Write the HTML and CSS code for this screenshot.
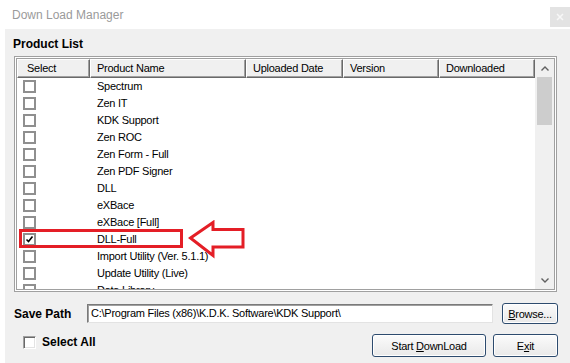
FILE: index.html
```html
<!DOCTYPE html>
<html lang="en">
<head>
    <meta charset="UTF-8">
    <title>Down Load Manager</title>
    <link rel="stylesheet" href="styles.css">
</head>
<body>
    <div class="titlebar">
        <span class="title">Down Load Manager</span>
        <div class="close-btn">
            <svg width="8" height="8" viewBox="0 0 8 8"><path d="M1 1 L7 7 M7 1 L1 7" stroke="#f7f7f7" stroke-width="1.5"/></svg>
        </div>
    </div>

    <div class="window">
        <div class="group-title">Product List</div>

        <div class="listbox">
            <div class="list-inner">
                <div class="grid-area">
                    <div class="header">
                        <div class="hcell first">Select</div>
                        <div class="hcell">Product Name</div>
                        <div class="hcell">Uploaded Date</div>
                        <div class="hcell">Version</div>
                        <div class="hcell">Downloaded</div>
                    </div>
                    <div class="rows">
                        <div class="row"><span class="cb"></span><span class="name">Spectrum</span></div>
                        <div class="row"><span class="cb"></span><span class="name">Zen IT</span></div>
                        <div class="row"><span class="cb"></span><span class="name">KDK Support</span></div>
                        <div class="row"><span class="cb"></span><span class="name">Zen ROC</span></div>
                        <div class="row"><span class="cb"></span><span class="name">Zen Form - Full</span></div>
                        <div class="row"><span class="cb"></span><span class="name">Zen PDF Signer</span></div>
                        <div class="row"><span class="cb"></span><span class="name">DLL</span></div>
                        <div class="row"><span class="cb"></span><span class="name">eXBace</span></div>
                        <div class="row"><span class="cb"></span><span class="name">eXBace [Full]</span></div>
                        <div class="row"><span class="cb checked"><svg width="9" height="9" viewBox="0 0 9 9"><path d="M1.5 4.5 L3.5 6.5 L7.5 1.5" stroke="#000" stroke-width="1.6" fill="none"/></svg></span><span class="name">DLL-Full</span></div>
                        <div class="row"><span class="cb"></span><span class="name">Import Utility (Ver. 5.1.1)</span></div>
                        <div class="row"><span class="cb"></span><span class="name">Update Utility (Live)</span></div>
                        <div class="row"><span class="cb"></span><span class="name">Data Library</span></div>
                    </div>
                </div>
                <div class="vscroll">
                    <div class="sbtn">
                        <svg width="8" height="5" viewBox="0 0 8 5"><path d="M0.5 4.5 L4 1 L7.5 4.5" stroke="#606060" stroke-width="1.4" fill="none"/></svg>
                    </div>
                    <div class="track"><div class="thumb"></div></div>
                    <div class="sbtn">
                        <svg width="8" height="5" viewBox="0 0 8 5"><path d="M0.5 0.5 L4 4 L7.5 0.5" stroke="#606060" stroke-width="1.4" fill="none"/></svg>
                    </div>
                </div>
            </div>

            <!-- callout drawn over the list -->
            <div class="highlight"></div>
            <svg class="callout" width="58" height="40" viewBox="0 0 58 40">
                <path d="M2.5 18 L25 2.5 L25 9.5 L55 9.5 L55 27 L25 27 L25 35.5 Z" fill="#fff" stroke="#e41e26" stroke-width="3"/>
            </svg>
        </div>

        <div class="save-row">
            <span class="label">Save Path</span>
            <div class="textbox">C:\Program Files (x86)\K.D.K. Software\KDK Support\</div>
            <button class="btn browse"><u>B</u>rowse...</button>
        </div>

        <div class="bottom-row">
            <span class="classic-cb"></span>
            <span class="label select-all">Select All</span>
            <button class="btn start">Start <u>D</u>ownLoad</button>
            <button class="btn exit">E<u>x</u>it</button>
        </div>
    </div>
</body>
</html>
```

FILE: styles.css
```css
body {
    margin: 0;
    width: 570px;
    height: 363px;
    overflow: hidden;
    background: #fff;
    font-family: "Liberation Sans", Arial, sans-serif;
    color: #000;
}

.titlebar {
    height: 29px;
    display: flex;
    align-items: center;
    padding-left: 12px;
}

.title {
    font-size: 12px;
    color: #9a9a9a;
    margin-top: 1px;
}

.close-btn {
    margin-left: auto;
    align-self: flex-start;
    margin-top: 7px;
    width: 20px;
    height: 20px;
    background: #e3e3e3;
    display: flex;
    align-items: center;
    justify-content: center;
}

.window {
    margin-left: 5px;
    height: 334px;
    background: #f0f0f0;
    padding: 8px 12px 0 9px;
    box-sizing: border-box;
}

.group-title {
    font-size: 12px;
    font-weight: bold;
    line-height: 14px;
    margin-left: -1px;
}

.listbox {
    position: relative;
    margin-top: 5px;
    width: 543px;
    height: 236px;
    box-sizing: border-box;
    border: 1px solid #a0a0a0;
    padding: 1px;
    background: #fff;
}

.list-inner {
    height: 100%;
    box-sizing: border-box;
    border: 1px solid #a0a0a0;
    display: flex;
    overflow: hidden;
}

.grid-area {
    width: 518px;
    display: flex;
    flex-direction: column;
}

.header {
    display: grid;
    grid-template-columns: 73px 156px 97px 96px 96px;
    height: 19px;
}

.hcell {
    box-sizing: border-box;
    background: #f0f0f0;
    border-top: 1px solid #fff;
    border-left: 1px solid #fff;
    border-right: 1px solid #696969;
    border-bottom: 1px solid #696969;
    box-shadow: inset -1px -1px #a0a0a0;
    font-size: 11px;
    letter-spacing: -0.25px;
    line-height: 16px;
    padding-left: 6px;
    white-space: nowrap;
}

.hcell.first {
    padding-left: 9px;
}

.rows {
    flex: 1;
    overflow: hidden;
}

.row {
    display: grid;
    grid-template-columns: 73px 156px;
    height: 17px;
    align-items: center;
}

.cb {
    width: 13px;
    height: 13px;
    box-sizing: border-box;
    border: 2px solid #8f8f8f;
    margin-left: 6px;
    display: flex;
    align-items: center;
    justify-content: center;
    background: #fff;
}

.name {
    font-size: 11px;
    letter-spacing: -0.25px;
    line-height: 15px;
    padding-left: 7px;
    white-space: nowrap;
}

.vscroll {
    width: 19px;
    display: flex;
    flex-direction: column;
    background: #f0f0f0;
}

.sbtn {
    height: 18px;
    display: flex;
    align-items: center;
    justify-content: center;
}

.track {
    flex: 1;
    padding: 0 2px;
}

.thumb {
    height: 48px;
    background: #cdcdcd;
}

.highlight {
    position: absolute;
    left: 4px;
    top: 172px;
    width: 164px;
    height: 19px;
    box-sizing: border-box;
    border: 3px solid #e41e26;
}

.callout {
    position: absolute;
    left: 173px;
    top: 163px;
}

.label {
    font-size: 12px;
    font-weight: bold;
    line-height: 14px;
}

.save-row {
    display: flex;
    align-items: center;
    height: 21px;
    margin-top: 11px;
}

.save-row .label {
    width: 73px;
}

.textbox {
    width: 406px;
    height: 19px;
    box-sizing: border-box;
    background: #fff;
    border: 1px solid;
    border-color: #7a7a7a #e3e3e3 #e3e3e3 #7a7a7a;
    box-shadow: inset 1px 1px #a0a0a0;
    font-size: 11px;
    letter-spacing: -0.25px;
    line-height: 17px;
    padding-left: 3px;
    white-space: nowrap;
}

.btn {
    font-family: "Liberation Sans", Arial, sans-serif;
    font-size: 11px;
    letter-spacing: -0.25px;
    color: #000;
    border: 1px solid #2d4b6e;
    border-radius: 3px;
    background: linear-gradient(#fbfbfb, #e9e9e9);
    box-shadow: inset 0 0 0 1px #fff;
    padding: 0;
    margin: 0;
}

.browse {
    width: 56px;
    height: 21px;
    margin-left: 9px;
}

.bottom-row {
    display: flex;
    align-items: flex-start;
    height: 23px;
    margin-top: 10px;
}

.classic-cb {
    width: 13px;
    height: 13px;
    box-sizing: border-box;
    margin: 2px 0 0 9px;
    background: #fff;
    border: 1px solid;
    border-color: #a0a0a0 #fff #fff #a0a0a0;
    box-shadow: inset 1px 1px #696969, inset -1px -1px #e3e3e3;
}

.select-all {
    margin: 1px 0 0 6px;
}

.start {
    margin-left: auto;
    width: 114px;
    height: 23px;
}

.exit {
    margin-left: 7px;
    width: 65px;
    height: 23px;
}
```
